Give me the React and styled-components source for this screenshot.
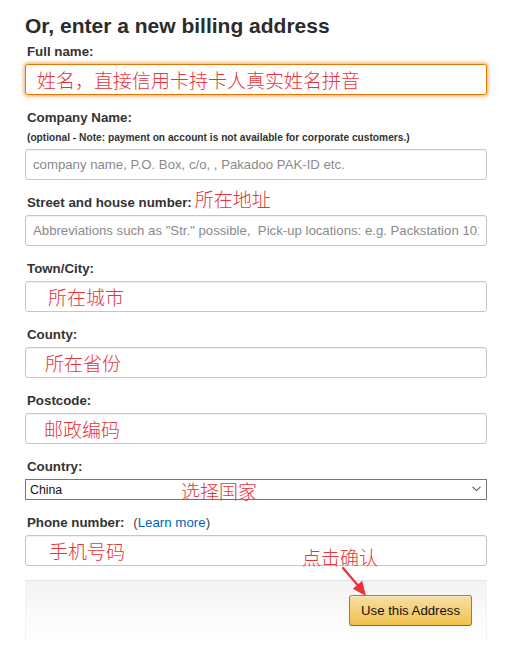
import React from "react";
import styled, { createGlobalStyle } from "styled-components";

const GlobalStyle = createGlobalStyle`
  html, body {
    margin: 0;
    padding: 0;
    background: #fff;
  }
  body {
    font-family: "Liberation Sans", Arial, sans-serif;
    color: #333;
  }
`;

const cjk = `"Noto Sans CJK SC", "Noto Sans", sans-serif`;
const noteRed = "#e8333a";

const Page = styled.div`
  width: 513px;
  box-sizing: border-box;
  padding: 12px 26px 0 25px;
`;

const Heading = styled.h2`
  margin: 0 0 4px;
  font-size: 21px;
  line-height: 27px;
  font-weight: 700;
  color: #2b2b2b;
`;

const Field = styled.div`
  margin-bottom: 14px;
`;

const Label = styled.div`
  padding-left: 2px;
  margin-bottom: 3px;
  font-size: 13.3px;
  line-height: 18px;
  font-weight: 700;
  color: #333;
  white-space: nowrap;
`;

const Hint = styled.div`
  padding: 3px 0 0 2px;
  margin: -3px 0 4px;
  font-size: 10.2px;
  line-height: 15px;
  font-weight: 700;
  color: #333;
`;

const LabelNote = styled.span`
  margin-left: 3px;
  font-family: ${cjk};
  font-weight: 300;
  font-size: 19px;
  line-height: 0;
  color: ${noteRed};
`;

const Help = styled.span`
  margin-left: 5px;
  font-weight: 400;
  color: #444;
`;

const Link = styled.a`
  color: #0066c0;
  text-decoration: none;
`;

const TextInput = styled.input`
  display: block;
  width: 100%;
  height: 31px;
  box-sizing: border-box;
  margin: 0;
  padding: 0 7px 0 ${(p) => p.$indent || 7}px;
  border: 1px solid ${(p) => (p.$focused ? "#e77600" : "#c6c6c6")};
  border-radius: 3px;
  outline: none;
  background: #fff;
  box-shadow: ${(p) =>
    p.$focused
      ? "0 0 3px 2px rgba(228, 121, 17, 0.45)"
      : "inset 0 1px 0 rgba(0, 0, 0, 0.05)"};
  font-family: ${(p) => (p.$note ? cjk : `"Liberation Sans", Arial, sans-serif`)};
  font-weight: ${(p) => (p.$note ? 300 : 400)};
  font-size: ${(p) => (p.$note ? "19px" : "13.2px")};
  color: ${(p) => (p.$note ? noteRed : "#111")};

  &::placeholder {
    color: #8a8a8a;
    opacity: 1;
  }
`;

const SelectBox = styled.div`
  position: relative;
  height: 21px;
`;

const Select = styled.select`
  display: block;
  width: 100%;
  height: 21px;
  box-sizing: border-box;
  margin: 0;
  padding: 0 20px 0 4px;
  border: 1px solid #767676;
  border-radius: 0;
  background: #fff;
  appearance: none;
  outline: none;
  font-family: "Liberation Sans", Arial, sans-serif;
  font-size: 12.3px;
  color: #111;
`;

const Chevron = styled.svg`
  position: absolute;
  right: 6px;
  top: 7px;
  pointer-events: none;
`;

const Overlay = styled.span`
  position: absolute;
  left: ${(p) => p.$x}px;
  top: ${(p) => p.$y}px;
  font-family: ${cjk};
  font-weight: 300;
  font-size: 19px;
  line-height: 19px;
  color: ${noteRed};
  white-space: nowrap;
  pointer-events: none;
`;

const ActionBar = styled.div`
  position: relative;
  display: flex;
  justify-content: flex-end;
  padding: 14px 14px 15px;
  border-top: 1px solid #e3e3e3;
  border-left: 1px solid #f2f2f2;
  border-right: 1px solid #f2f2f2;
  background: linear-gradient(#f3f3f3, #fff);
`;

const Arrow = styled.svg`
  position: absolute;
  left: 310px;
  top: -16px;
  overflow: visible;
`;

const Button = styled.button`
  height: 31px;
  box-sizing: border-box;
  padding: 0 11px;
  border: 1px solid;
  border-color: #a88734 #9c7e31 #846a29;
  border-radius: 3px;
  background: linear-gradient(to bottom, #f7dfa5, #f0c14b);
  box-shadow: inset 0 1px 0 rgba(255, 255, 255, 0.4);
  font-family: "Liberation Sans", Arial, sans-serif;
  font-size: 13.2px;
  color: #111;
  cursor: pointer;
`;

export default function App() {
  return (
    <>
      <GlobalStyle />
      <Page>
        <Heading>Or, enter a new billing address</Heading>

        <Field>
          <Label>Full name:</Label>
          <TextInput $focused $note $indent={11} defaultValue="姓名，直接信用卡持卡人真实姓名拼音" />
        </Field>

        <Field>
          <Label>Company Name:</Label>
          <Hint>(optional - Note: payment on account is not available for corporate customers.)</Hint>
          <TextInput placeholder="company name, P.O. Box, c/o, , Pakadoo PAK-ID etc." />
        </Field>

        <Field>
          <Label>
            Street and house number:<LabelNote>所在地址</LabelNote>
          </Label>
          <TextInput placeholder={'Abbreviations such as "Str." possible,  Pick-up locations: e.g. Packstation 101'} />
        </Field>

        <Field>
          <Label>Town/City:</Label>
          <TextInput $note $indent={22} defaultValue="所在城市" />
        </Field>

        <Field>
          <Label>County:</Label>
          <TextInput $note $indent={19} defaultValue="所在省份" />
        </Field>

        <Field>
          <Label>Postcode:</Label>
          <TextInput $note $indent={18} defaultValue="邮政编码" />
        </Field>

        <Field>
          <Label>Country:</Label>
          <SelectBox>
            <Select defaultValue="CN">
              <option value="CN">China</option>
            </Select>
            <Chevron width="9" height="6" viewBox="0 0 9 6">
              <path d="M0.5 0.8 L4.5 4.6 L8.5 0.8" fill="none" stroke="#555" strokeWidth="1.1" />
            </Chevron>
            <Overlay $x={156} $y={2}>选择国家</Overlay>
          </SelectBox>
        </Field>

        <Field>
          <Label>
            Phone number: <Help>(<Link href="#">Learn more</Link>)</Help>
          </Label>
          <TextInput $note $indent={23} defaultValue="手机号码" />
        </Field>

        <ActionBar>
          <Overlay $x={276} $y={-34}>点击确认</Overlay>
          <Arrow width="40" height="36" viewBox="0 0 40 36">
            <line x1="7" y1="3" x2="22" y2="20.5" stroke={noteRed} strokeWidth="2.2" strokeLinecap="round" />
            <polygon points="30,31 16.8,23.8 26.2,15.8" fill={noteRed} />
          </Arrow>
          <Button type="button">Use this Address</Button>
        </ActionBar>
      </Page>
    </>
  );
}
